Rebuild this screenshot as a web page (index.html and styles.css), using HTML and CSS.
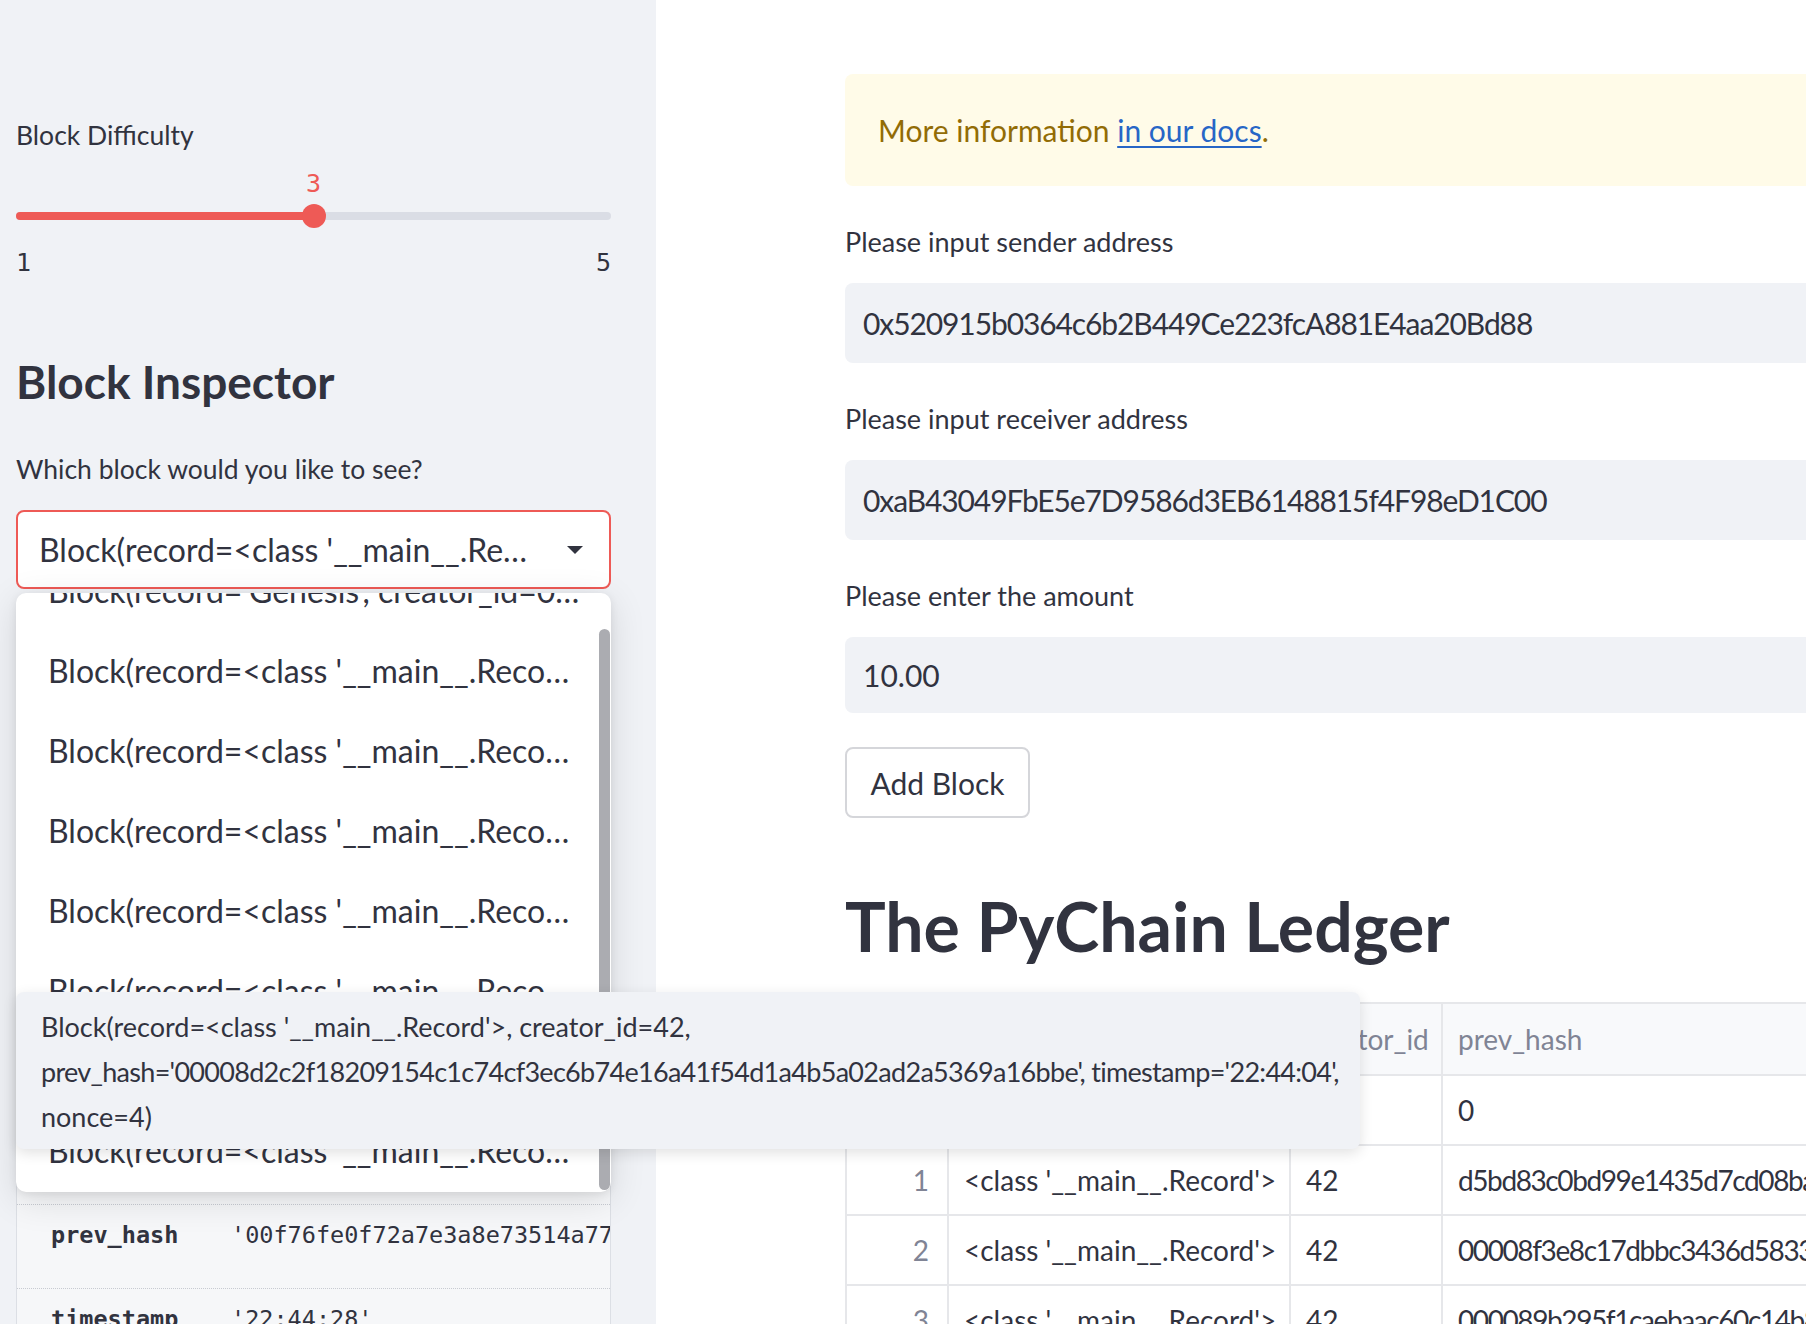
FILE: index.html
```html
<!DOCTYPE html>
<html lang="en">
<head>
<meta charset="utf-8">
<title>PyChain</title>
<link rel="stylesheet" href="styles.css">
</head>
<body>
<div class="app">
  <aside class="sidebar">
    <div class="label">Block Difficulty</div>
    <div class="slider">
      <div class="track">
        <div class="fill"></div>
        <div class="thumb"><span class="thumb-val">3</span></div>
      </div>
      <div class="ticks"><span>1</span><span>5</span></div>
    </div>
    <h2 class="sb-title">Block Inspector</h2>
    <div class="label label-select">Which block would you like to see?</div>
    <div class="select-wrap">
      <div class="select">
        <span class="select-text">Block(record=&lt;class '__main__.Re…</span>
        <svg class="caret" viewBox="0 0 16 8" width="16" height="8"><path d="M0 0 L16 0 L8 8 Z" fill="#31333f"/></svg>
      </div>
      <div class="menu">
        <div class="menu-list">
          <div class="menu-item">Block(record='Genesis', creator_id=0…</div>
          <div class="menu-item">Block(record=&lt;class '__main__.Reco…</div>
          <div class="menu-item">Block(record=&lt;class '__main__.Reco…</div>
          <div class="menu-item">Block(record=&lt;class '__main__.Reco…</div>
          <div class="menu-item">Block(record=&lt;class '__main__.Reco…</div>
          <div class="menu-item">Block(record=&lt;class '__main__.Reco…</div>
          <div class="menu-item">Block(record=&lt;class '__main__.Reco…</div>
          <div class="menu-item">Block(record=&lt;class '__main__.Reco…</div>
          <div class="menu-item">Block(record=&lt;class '__main__.Reco…</div>
        </div>
        <div class="scrollbar"></div>
      </div>
    </div>
    <div class="help">
      <div class="help-head">
        <div class="help-name">Block</div>
        <div class="help-doc">Block(record: Any, creator_id: int, prev_hash: str = 0, timestamp: str = '22:44:28', nonce: int = 0)</div>
      </div>
      <div class="help-row"><span class="help-key">record</span><span class="help-val">&lt;class '__main__.Record'&gt;</span></div>
      <div class="help-row"><span class="help-key">creator_id</span><span class="help-val">42</span></div>
      <div class="help-row"><span class="help-key">prev_hash</span><span class="help-val">'00f76fe0f72a7e3a8e73514a77c1d0b93f2e6a8c4d51b7e09a3f6c2d8e41b57a'</span></div>
      <div class="help-row"><span class="help-key">timestamp</span><span class="help-val">'22:44:28'</span></div>
      <div class="help-row"><span class="help-key">nonce</span><span class="help-val">2</span></div>
    </div>
  </aside>

  <main class="main">
    <div class="content">
      <div class="alert">More information&nbsp;<a href="#">in our docs</a>.</div>

      <div class="field">
        <div class="field-label">Please input sender address</div>
        <div class="input hex">0x520915b0364c6b2B449Ce223fcA881E4aa20Bd88</div>
      </div>
      <div class="field">
        <div class="field-label">Please input receiver address</div>
        <div class="input hex">0xaB43049FbE5e7D9586d3EB6148815f4F98eD1C00</div>
      </div>
      <div class="field">
        <div class="field-label">Please enter the amount</div>
        <div class="input num">10.00</div>
      </div>

      <button class="btn">Add Block</button>

      <h1 class="h1">The PyChain Ledger</h1>

      <table class="tbl">
        <colgroup>
          <col class="c-idx"><col class="c-rec"><col class="c-cre"><col class="c-hash"><col class="c-ts"><col class="c-non">
        </colgroup>
        <thead>
          <tr><th class="idx"></th><th>record</th><th>creator_id</th><th>prev_hash</th><th>timestamp</th><th>nonce</th></tr>
        </thead>
        <tbody>
          <tr><td class="idx">0</td><td>Genesis</td><td>0</td><td>0</td><td>22:43:51</td><td>0</td></tr>
          <tr><td class="idx">1</td><td>&lt;class '__main__.Record'&gt;</td><td>42</td><td class="hash">d5bd83c0bd99e1435d7cd08ba4f7c2e91b06d3a5e8f42c7b19d0a6e3f5b8c214</td><td>22:43:58</td><td>7</td></tr>
          <tr><td class="idx">2</td><td>&lt;class '__main__.Record'&gt;</td><td>42</td><td class="hash">00008f3e8c17dbbc3436d5833b2a9e41c7f06d58e2b194a3c6f7d0e8b52a1c49</td><td>22:44:01</td><td>3</td></tr>
          <tr><td class="idx">3</td><td>&lt;class '__main__.Record'&gt;</td><td>42</td><td class="hash">000089b295f1caebaac60c14b8d2e7f3a04c9b16e5d82f7a3c1b0e94d6a5f238</td><td>22:44:04</td><td>4</td></tr>
        </tbody>
      </table>
    </div>
  </main>
</div>

<div class="tooltip">
  <div>Block(record=&lt;class '__main__.Record'&gt;, creator_id=42,</div>
  <div class="tip-hex">prev_hash='00008d2c2f18209154c1c74cf3ec6b74e16a41f54d1a4b5a02ad2a5369a16bbe', timestamp='22:44:04',</div>
  <div>nonce=4)</div>
</div>
</body>
</html>
```

FILE: styles.css
```css
* {
  box-sizing: border-box;
  margin: 0;
  padding: 0;
}

html,
body {
  width: 1806px;
  height: 1324px;
  overflow: hidden;
}

body {
  position: relative;
  font-family: Lato, "Noto Sans", sans-serif;
  color: #31333f;
  background: #ffffff;
}

.app {
  display: flex;
  height: 1324px;
}

/* ---------- sidebar ---------- */
.sidebar {
  flex: 0 0 656px;
  background: #f0f2f6;
  padding: 114px 45px 0 16px;
  overflow: hidden;
}

.label {
  font-size: 26.5px;
  line-height: 42px;
}

.slider {
  padding-top: 56px;
}

.track {
  position: relative;
  height: 8px;
  border-radius: 4px;
  background: #dadde5;
}

.fill {
  width: 50%;
  height: 100%;
  border-radius: 4px;
  background: #ee5a56;
}

.thumb {
  position: absolute;
  left: 50%;
  top: 50%;
  width: 24px;
  height: 24px;
  margin: -12px 0 0 -12px;
  border-radius: 50%;
  background: #ee5a56;
}

.thumb-val {
  position: absolute;
  left: 50%;
  top: -33px;
  transform: translateX(-50%);
  font-family: "DejaVu Sans Mono", monospace;
  font-size: 25px;
  line-height: 25px;
  color: #ee5a56;
}

.ticks {
  display: flex;
  justify-content: space-between;
  margin-top: 25px;
  font-family: "DejaVu Sans Mono", monospace;
  font-size: 25px;
  line-height: 36px;
}

.sb-title {
  margin-top: 71px;
  font-size: 46px;
  line-height: 60px;
  font-weight: 700;
}

.label-select {
  margin-top: 36px;
}

.select-wrap {
  position: relative;
  margin-top: 20px;
}

.select {
  display: flex;
  align-items: center;
  height: 79px;
  padding: 0 26px 0 21px;
  border: 2px solid #ee5a56;
  border-radius: 8px;
  background: #ffffff;
  font-size: 32px;
}

.select-text {
  white-space: nowrap;
  overflow: hidden;
}

.caret {
  flex: 0 0 16px;
  margin-left: auto;
}

.menu {
  position: absolute;
  left: 0;
  right: 0;
  top: calc(100% + 4px);
  height: 599px;
  background: #ffffff;
  border-radius: 10px;
  overflow: hidden;
  z-index: 5;
  box-shadow: 0 2px 8px rgba(0, 0, 0, 0.08), 0 8px 36px rgba(0, 0, 0, 0.12);
}

.menu-list {
  margin-top: -43px;
}

.menu-item {
  display: flex;
  align-items: center;
  height: 80px;
  padding-left: 32px;
  font-size: 32px;
  white-space: nowrap;
  overflow: hidden;
}

.scrollbar {
  position: absolute;
  right: 1px;
  top: 36px;
  bottom: 2px;
  width: 11px;
  border-radius: 6px;
  background: #abacb1;
}

.help {
  margin-top: 32px;
  background: #f6f7f9;
  border-left: 1px solid #dcdfe5;
  border-right: 1px solid #dcdfe5;
  overflow: hidden;
}

.help-head {
  height: 415px;
  padding: 30px 34px;
}

.help-name {
  font-family: "DejaVu Sans Mono", monospace;
  font-weight: 700;
  font-size: 28px;
  line-height: 44px;
}

.help-doc {
  margin-top: 16px;
  font-size: 24px;
  line-height: 38px;
}

.help-row {
  display: flex;
  padding: 12px 0 35px 34px;
  border-top: 1px dotted #c8cbd2;
  font-family: "DejaVu Sans Mono", monospace;
  font-size: 23.5px;
  line-height: 36px;
  white-space: nowrap;
}

.help-key {
  flex: 0 0 180px;
  font-weight: 700;
}

/* ---------- main ---------- */
.main {
  flex: 1;
  overflow: hidden;
  padding: 74px 0 0 189px;
}

.content {
  width: 1460px;
}

.alert {
  display: flex;
  align-items: center;
  height: 112px;
  padding-left: 33px;
  border-radius: 8px;
  background: #fffbe8;
  color: #926c05;
  font-size: 30px;
}

.alert a {
  color: #2766c6;
  text-decoration: underline;
  text-decoration-thickness: 2px;
  text-underline-offset: 4px;
}

.field {
  margin-top: 35px;
}

.field-label {
  font-size: 27px;
  line-height: 42px;
  margin-bottom: 20px;
}

.input {
  display: flex;
  align-items: center;
  height: 80px;
  padding-left: 18px;
  border-radius: 8px;
  background: #f0f2f6;
  font-size: 30px;
  white-space: nowrap;
}

.input.hex {
  letter-spacing: -1.1px;
}

.input.num {
  height: 76px;
}

.btn {
  display: flex;
  align-items: center;
  justify-content: center;
  margin-top: 34px;
  width: 185px;
  height: 71px;
  border: 2px solid #d5d6da;
  border-radius: 8px;
  background: #ffffff;
  color: #31333f;
  font-family: Lato, "Noto Sans", sans-serif;
  font-size: 30px;
}

.h1 {
  margin-top: 68px;
  font-size: 68px;
  line-height: 79px;
  font-weight: 700;
}

.tbl {
  margin-top: 37px;
  width: 2500px;
  border-collapse: collapse;
  table-layout: fixed;
  font-size: 28px;
}

.c-idx { width: 102px; }
.c-rec { width: 342px; }
.c-cre { width: 152px; }
.c-hash { width: 1100px; }
.c-ts { width: 300px; }
.c-non { width: 504px; }

.tbl th,
.tbl td {
  border: 2px solid #e6e7ea;
  padding: 0 15px;
  text-align: left;
  white-space: nowrap;
  overflow: hidden;
  font-weight: 400;
}

.tbl th {
  height: 72px;
  background: #f8f9fb;
  color: #808495;
}

.tbl td {
  height: 70px;
}

.tbl td.hash {
  letter-spacing: -1.4px;
}

.tbl .idx {
  text-align: right;
  color: #808495;
  padding-right: 18px;
}

/* ---------- tooltip ---------- */
.tooltip {
  position: absolute;
  left: 16px;
  top: 992px;
  width: 1344px;
  height: 157px;
  padding: 12px 25px;
  border-radius: 8px;
  background: #f0f2f6;
  font-size: 27px;
  line-height: 45px;
  white-space: nowrap;
  z-index: 10;
  box-shadow: 0 4px 14px rgba(0, 0, 0, 0.12);
}

.tip-hex {
  letter-spacing: -0.7px;
}
```
